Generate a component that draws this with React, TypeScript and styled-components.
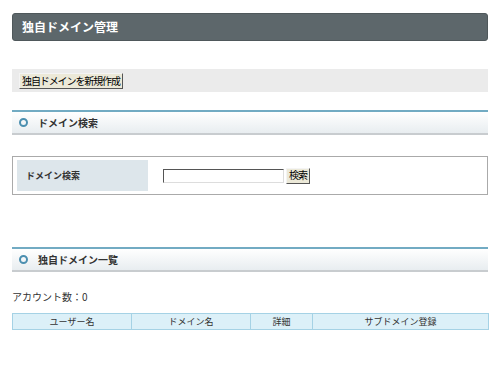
import styled, { createGlobalStyle } from 'styled-components';

const GlobalStyle = createGlobalStyle`
  body {
    margin: 0;
    background: #ffffff;
    font-family: "Noto Sans CJK JP", "Liberation Sans", sans-serif;
    color: #333333;
  }
`;

const Page = styled.div`
  padding: 13px 12px 0;
  width: 476px;
`;

const TitleBar = styled.h1`
  margin: 0;
  height: 28px;
  box-sizing: border-box;
  padding-left: 9px;
  background: #5d676b;
  border: 1px solid #4f585b;
  border-radius: 3px;
  color: #ffffff;
  font-size: 12px;
  font-weight: bold;
  line-height: 26px;
`;

const ActionBand = styled.div`
  margin-top: 28px;
  height: 23px;
  box-sizing: border-box;
  padding: 4px 7px 3px;
  background: #ebebeb;
  display: flex;
  align-items: flex-start;
`;

const NativeButton = styled.button`
  height: 16px;
  padding: 0 2px 1px;
  margin: 0;
  background: #ece9d8;
  border: 1px solid;
  border-color: #f4f4f4 #555555 #555555 #f4f4f4;
  font-family: "Noto Sans CJK JP", sans-serif;
  font-size: 10px;
  letter-spacing: -1.1px;
  line-height: 12px;
  color: #000000;
`;

const SectionHead = styled.h2<{ $gap: number }>`
  margin: ${p => p.$gap}px 0 0;
  height: 25px;
  box-sizing: border-box;
  display: flex;
  align-items: center;
  gap: 10px;
  padding-left: 7px;
  border-top: 2px solid #72abc3;
  border-bottom: 2px solid #c8cccf;
  background: linear-gradient(#ffffff, #e8edf0);
  font-size: 10px;
  font-weight: bold;
  color: #333333;
`;

const Ring = styled.span`
  width: 9px;
  height: 9px;
  box-sizing: border-box;
  border: 2px solid #4b8fb0;
  border-radius: 50%;
`;

const SearchBox = styled.div`
  margin-top: 21px;
  border: 1px solid #aaaaaa;
  padding: 3px 4px 3px;
  display: grid;
  grid-template-columns: 131px 1fr;
  align-items: center;
`;

const LabelCell = styled.div`
  height: 31px;
  background: #dde6eb;
  padding-left: 9px;
  display: flex;
  align-items: center;
  font-size: 9px;
  font-weight: bold;
  color: #333333;
`;

const FieldCell = styled.div`
  display: flex;
  align-items: center;
  gap: 2px;
  padding-left: 15px;
`;

const TextInput = styled.input`
  width: 121px;
  height: 14px;
  box-sizing: border-box;
  margin: 0;
  padding: 0;
  border: 1px solid;
  border-color: #555555 #dddddd #dddddd #555555;
  background: #ffffff;
`;

const Count = styled.p`
  margin: 18px 0 0;
  font-size: 10px;
  line-height: 14px;
  color: #333333;
`;

const ListTable = styled.table`
  margin-top: 9px;
  width: 476px;
  border-collapse: collapse;
  table-layout: fixed;
`;

const HeadCell = styled.th`
  height: 15px;
  padding: 0;
  background: #dcf0f8;
  border: 1px solid #a5d2e5;
  font-size: 9px;
  font-weight: normal;
  color: #333333;
  line-height: 13px;
`;

export default function App() {
  const columns = [
    { label: 'ユーザー名', w: 119 },
    { label: 'ドメイン名', w: 119 },
    { label: '詳細', w: 62 },
    { label: 'サブドメイン登録', w: 176 },
  ];

  return (
    <>
      <GlobalStyle />
      <Page>
        <TitleBar>独自ドメイン管理</TitleBar>

        <ActionBand>
          <NativeButton>独自ドメインを新規作成</NativeButton>
        </ActionBand>

        <SectionHead $gap={18}>
          <Ring />
          ドメイン検索
        </SectionHead>

        <SearchBox>
          <LabelCell>ドメイン検索</LabelCell>
          <FieldCell>
            <TextInput type="text" />
            <NativeButton>検索</NativeButton>
          </FieldCell>
        </SearchBox>

        <SectionHead $gap={52}>
          <Ring />
          独自ドメイン一覧
        </SectionHead>

        <Count>アカウント数：0</Count>

        <ListTable>
          <colgroup>
            {columns.map(c => (
              <col key={c.label} style={{ width: c.w }} />
            ))}
          </colgroup>
          <thead>
            <tr>
              {columns.map(c => (
                <HeadCell key={c.label}>{c.label}</HeadCell>
              ))}
            </tr>
          </thead>
        </ListTable>
      </Page>
    </>
  );
}
